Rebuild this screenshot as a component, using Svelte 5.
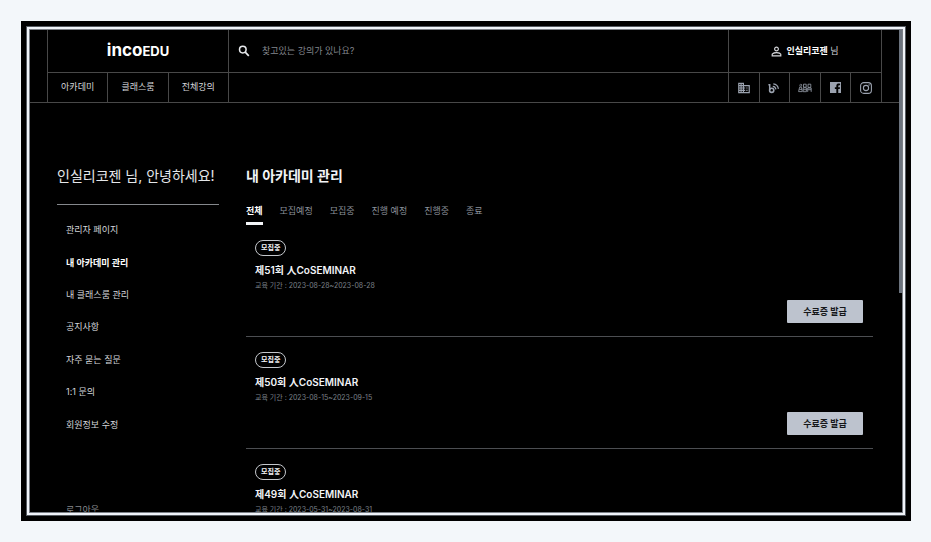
<script>
  let query = $state('');
  let activeTab = $state('전체');

  const nav = ['아카데미', '클래스룸', '전체강의'];
  const menu = ['관리자 페이지', '내 아카데미 관리', '내 클래스룸 관리', '공지사항', '자주 묻는 질문', '1:1 문의', '회원정보 수정'];
  const current = '내 아카데미 관리';
  const tabs = ['전체', '모집예정', '모집중', '진행 예정', '진행중', '종료'];
  const courses = [
    { title: '제51회 人CoSEMINAR', period: '2023-08-28~2023-08-28' },
    { title: '제50회 人CoSEMINAR', period: '2023-08-15~2023-09-15' },
    { title: '제49회 人CoSEMINAR', period: '2023-05-31~2023-08-31' }
  ];
</script>

<div class="frame">
  <div class="screen">
    <header>
      <div class="bar">
        <div class="row top">
          <a class="logo" href="#home" aria-label="incoEDU">inco<span>EDU</span></a>
          <label class="search">
            <svg viewBox="0 0 12 12" width="12" height="12" aria-hidden="true">
              <circle cx="4.8" cy="4.6" r="3.3" fill="none" stroke="currentColor" stroke-width="1.5" />
              <path d="M7.2 7.1l3.6 3.7" stroke="currentColor" stroke-width="1.7" />
            </svg>
            <input type="text" placeholder="찾고있는 강의가 있나요?" aria-label="강의 검색" bind:value={query} />
          </label>
          <a class="user" href="#me">
            <svg viewBox="3 3 18 18" width="11" height="11" fill="currentColor" aria-hidden="true">
              <path d="M12 5.9a2.1 2.1 0 110 4.2 2.1 2.1 0 010-4.2m0 9c2.97 0 6.1 1.46 6.1 2.1v1.1H5.9V17c0-.64 3.13-2.1 6.1-2.1M12 4C9.79 4 8 5.79 8 8s1.79 4 4 4 4-1.79 4-4-1.79-4-4-4zm0 9c-2.67 0-8 1.34-8 4v3h16v-3c0-2.66-5.33-4-8-4z" />
            </svg>
            <span><b>인실리코젠</b> 님</span>
          </a>
        </div>
        <div class="row bottom">
          <nav>
            {#each nav as item}
              <a href="#nav">{item}</a>
            {/each}
          </nav>
          <div class="blank"></div>
          <div class="links">
            <a href="#company" aria-label="회사">
              <svg viewBox="0 0 24 24" width="14" height="14" fill="currentColor">
                <path d="M12 7V3H2v18h20V7H12zM6 19H4v-2h2v2zm0-4H4v-2h2v2zm0-4H4V9h2v2zm0-4H4V5h2v2zm4 12H8v-2h2v2zm0-4H8v-2h2v2zm0-4H8V9h2v2zm0-4H8V5h2v2zm10 12h-8v-2h2v-2h-2v-2h2v-2h-2V9h8v10zm-2-8h-2v2h2v-2zm0 4h-2v2h2v-2z" />
              </svg>
            </a>
            <a href="#blog" aria-label="블로그">
              <svg viewBox="0 0 12 12" width="12" height="12" fill="none" stroke="currentColor">
                <path d="M.4 2.800H1.700v5.200" stroke-width="1.500" />
                <circle cx="3.700" cy="8.300" r="2.100" stroke-width="1.600" />
                <path d="M4.800 4.300c1.800.2 2.900 1.300 3.100 3.100M5.300 1.900c2.900.3 4.700 2.100 5.100 5" stroke-width="1.200" />
              </svg>
            </a>
            <a href="#community" aria-label="커뮤니티">
              <svg viewBox="0 0 14 10" width="14" height="10" fill="none" stroke="currentColor" stroke-width=".8">
                <path d="M2.6 1.2c-.8 0-.9 1.6-.3 2.4M3 1.2c.8 0 .9 1.6.2 2.4M.6 8.6l1-4.400h1.800l.9 4.400zM1.300 6.400h2.600" />
                <path d="M5.500 1.200h2.700v3H5.500zM5.200 4.800h3.200v3.900H5.200zM5.300 6.700h3.100" />
                <path d="M10 1.200h2.800v3.200H10zM9.700 8.900V5h3.500v3.900M9.800 6.700h3.300" />
              </svg>
            </a>
            <a href="#facebook" aria-label="페이스북">
              <svg viewBox="0 0 12 12" width="11" height="11">
                <path d="M0 0h12v12H9V7.600h1.600l.3-2H9V4.500c0-.6.3-.9 1-.9h1V1.900C9 1.500 6.900 1.800 6.900 4.200v1.400H5.300v2h1.600V12H0z" fill="currentColor" />
              </svg>
            </a>
            <a href="#instagram" aria-label="인스타그램">
              <svg viewBox="0 0 12 12" width="12" height="12" fill="none" stroke="currentColor">
                <rect x=".6" y=".6" width="10.800" height="10.800" rx="3.200" stroke-width="1.100" />
                <circle cx="6" cy="6" r="2.600" stroke-width="1.100" />
                <circle cx="9.100" cy="2.900" r=".7" fill="currentColor" stroke="none" />
              </svg>
            </a>
          </div>
        </div>
      </div>
    </header>

    <div class="body">
      <aside>
        <p class="hello">인실리코젠 님, 안녕하세요!</p>
        <ul>
          {#each menu as item}
            <li><a href="#menu" class:current={item === current}>{item}</a></li>
          {/each}
        </ul>
        <a class="logout" href="#logout">로그아웃</a>
      </aside>

      <main>
        <h1>내 아카데미 관리</h1>
        <div class="tabs" role="tablist">
          {#each tabs as tab}
            <button role="tab" aria-selected={tab === activeTab} class:active={tab === activeTab} onclick={() => (activeTab = tab)}>{tab}</button>
          {/each}
        </div>
        {#each courses as course}
          <article>
            <span class="badge">모집중</span>
            <h2>{course.title}</h2>
            <p>교육 기간 : {course.period}</p>
            <button class="issue">수료증 발급</button>
          </article>
        {/each}
      </main>
    </div>
    <div class="thumb"></div>
  </div>
</div>

<style>
  :global(body) {
    margin: 0;
    background: #f3f7fa;
  }
  .frame {
    box-sizing: border-box;
    height: calc(100vh - 42px);
    margin: 21px 20px 21px 21px;
    padding: 6px;
    background: #000;
    font-family: Inter, 'Noto Sans CJK KR', sans-serif;
    font-size: 9px;
    line-height: 14px;
    color: #d5d7db;
    display: flow-root;
  }
  .screen {
    position: relative;
    box-sizing: border-box;
    height: 100%;
    overflow: hidden;
    border: 2px solid #f0f4fa;
    outline: 1px solid #555a60;
    box-shadow: inset 0 0 0 1px #7b8087;
    padding: 1px;
  }
  a {
    color: inherit;
    text-decoration: none;
  }
  button {
    font: inherit;
    border: 0;
    padding: 0;
    background: none;
    cursor: pointer;
  }
  svg {
    display: block;
    flex: none;
  }
  header {
    border-bottom: 1px solid #484848;
    padding: 0 20px 0 17px;
  }
  .bar {
    border: solid #484848;
    border-width: 0 1px;
  }
  .row {
    display: grid;
    grid-template-columns: 180px 1fr 153px;
  }
  .row > * + * {
    border-left: 1px solid #484848;
  }
  .top {
    height: 42px;
    border-bottom: 1px solid #484848;
  }
  .bottom {
    height: 29px;
  }
  .logo {
    display: flex;
    align-items: baseline;
    justify-content: center;
    font-size: 17px;
    line-height: 40px;
    font-weight: 700;
    color: #fff;
  }
  .logo span {
    font-size: 13px;
  }
  .search {
    display: flex;
    align-items: center;
    gap: 12px;
    padding-left: 9px;
    color: #e8eaed;
  }
  input {
    flex: 1;
    min-width: 0;
    padding: 0;
    border: 0;
    outline: 0;
    background: none;
    font: inherit;
    color: #fff;
  }
  input::placeholder {
    color: #82868c;
    opacity: 1;
  }
  .user {
    display: flex;
    align-items: center;
    justify-content: center;
    gap: 4px;
  }
  .user b {
    color: #fff;
  }
  nav,
  .links {
    display: flex;
  }
  nav a,
  .links a {
    flex: 1;
    display: flex;
    align-items: center;
    justify-content: center;
  }
  nav a {
    padding-bottom: 2px;
  }
  nav a + a,
  .links a + a {
    border-left: 1px solid #484848;
  }
  .links {
    color: #9ba2af;
  }
  .body {
    display: grid;
    grid-template-columns: 162px 1fr;
    gap: 27px;
    padding: 62px 29px 0 27px;
  }
  .hello {
    margin: 0;
    padding-bottom: 17px;
    border-bottom: 1px solid #85888c;
    font-size: 14px;
    line-height: 22px;
    color: #e4e6e9;
  }
  ul {
    height: 227px;
    display: flex;
    flex-direction: column;
    list-style: none;
    margin: 9px 0 62px;
    padding: 0 9px;
  }
  li {
    flex: 1;
    display: flex;
    align-items: center;
  }
  .current {
    font-weight: 700;
    color: #fff;
  }
  .logout {
    padding: 0 9px;
    color: #85888c;
  }
  h1 {
    margin: 0 0 16px;
    font-size: 14px;
    line-height: 22px;
    font-weight: 700;
    color: #f2f4f7;
  }
  .tabs {
    display: flex;
    gap: 17px;
  }
  .tabs button {
    padding: 1px 0 4px;
    border-bottom: 3px solid transparent;
    color: #8d939c;
  }
  .tabs .active {
    border-color: #f2f4f7;
    font-weight: 700;
    color: #fff;
  }
  article {
    display: flex;
    flex-direction: column;
    align-items: flex-start;
    padding: 15px 10px 13px 9px;
    border-bottom: 1px solid #4c4e52;
  }
  .badge {
    border: 1px solid #c4c7cc;
    border-radius: 8px;
    padding: 0 5px;
    font-size: 7px;
    line-height: 14px;
    font-weight: 700;
    color: #f2f4f7;
  }
  h2 {
    margin: 6px 0 2px;
    font-size: 10px;
    line-height: 16px;
    font-weight: 600;
    color: #f2f4f7;
  }
  article p {
    margin: 0 0 9px;
    font-size: 7px;
    line-height: 11px;
    color: #7b8089;
  }
  .issue {
    align-self: flex-end;
    width: 76px;
    height: 23px;
    border-radius: 1px;
    background: #bdc3ce;
    font-weight: 700;
    color: #15171a;
  }
  .thumb {
    position: absolute;
    top: 1px;
    right: 1px;
    width: 3px;
    height: 263px;
    background: #6b737e;
  }
</style>
